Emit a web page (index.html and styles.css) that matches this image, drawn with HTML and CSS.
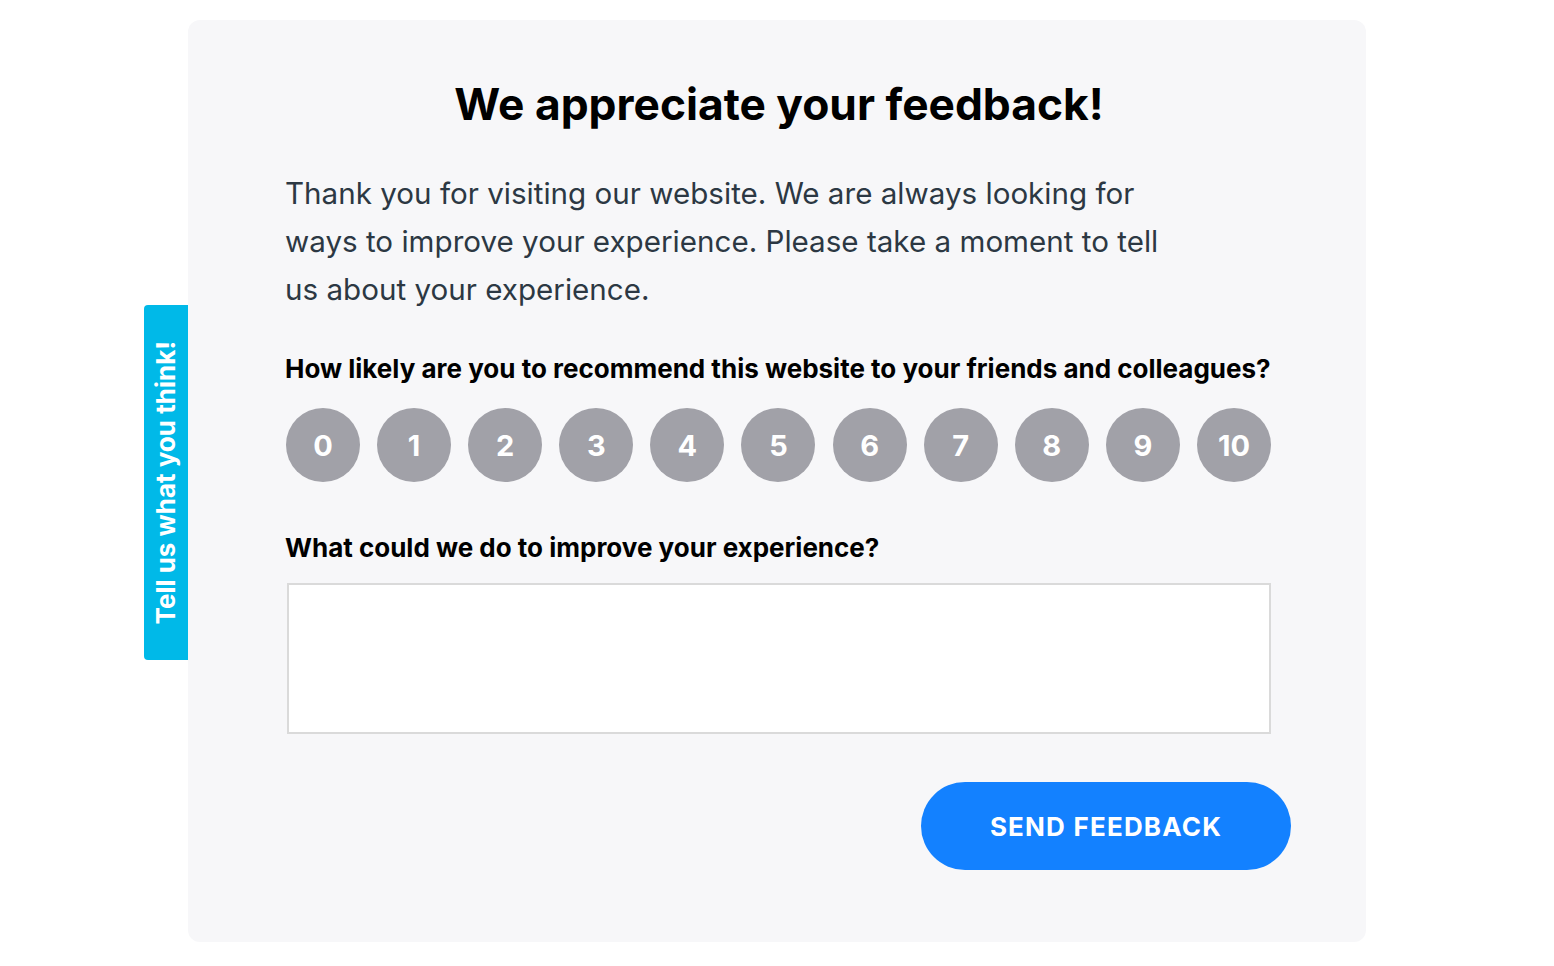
FILE: index.html
```html
<!DOCTYPE html>
<html lang="en">
<head>
<meta charset="utf-8">
<title>Feedback</title>
<link rel="stylesheet" href="styles.css">
</head>
<body>
<div class="page">
  <div class="card">
    <button class="side-tab" type="button"><span>Tell us what you think!</span></button>
    <h1 class="title">We appreciate your feedback!</h1>
    <p class="intro">Thank you for visiting our website. We are always looking for ways to improve your experience. Please take a moment to tell us about your experience.</p>
    <h2 class="question q-rate">How likely are you to recommend this website to your friends and colleagues?</h2>
    <div class="scale">
      <button class="dot" type="button">0</button>
      <button class="dot" type="button">1</button>
      <button class="dot" type="button">2</button>
      <button class="dot" type="button">3</button>
      <button class="dot" type="button">4</button>
      <button class="dot" type="button">5</button>
      <button class="dot" type="button">6</button>
      <button class="dot" type="button">7</button>
      <button class="dot" type="button">8</button>
      <button class="dot" type="button">9</button>
      <button class="dot" type="button">10</button>
    </div>
    <h2 class="question q-improve">What could we do to improve your experience?</h2>
    <textarea class="answer"></textarea>
    <button class="send" type="button">SEND FEEDBACK</button>
  </div>
</div>
</body>
</html>
```
FILE: styles.css
```css
* { box-sizing: border-box; }
html, body { margin: 0; padding: 0; background: #ffffff; }
body { font-family: "Inter", "Lato", sans-serif; }

.page {
  display: flex;
  justify-content: center;
  padding-top: 20px;
}

.card {
  position: relative;
  width: 1178px;
  height: 922px;
  background: #f7f7f9;
  border-radius: 12px;
  padding: 56px 95px 0 97px;
  display: flex;
  flex-direction: column;
}

.side-tab {
  position: absolute;
  left: -44px;
  top: 285px;
  width: 44px;
  height: 355px;
  background: #00b9e8;
  border: none;
  border-radius: 4px 0 0 4px;
  padding: 0;
  display: flex;
  align-items: center;
  justify-content: center;
  cursor: pointer;
}
.side-tab span {
  writing-mode: vertical-rl;
  transform: rotate(180deg);
  color: #ffffff;
  font-family: "Inter", sans-serif;
  font-weight: 700;
  font-size: 26px;
  line-height: 44px;
  white-space: nowrap;
}

.title {
  margin: 0;
  text-align: center;
  font-size: 44.3px;
  line-height: 56px;
  font-weight: 700;
  color: #000000;
  margin-right: -2px;
}

.intro {
  margin: 37px 0 0 0;
  max-width: 888px;
  font-size: 29.6px;
  line-height: 48px;
  font-weight: 400;
  color: #2c3843;
}

.question {
  margin: 0;
  font-size: 26px;
  line-height: 32px;
  font-weight: 700;
  color: #000000;
}
.q-rate { margin-top: 40px; }
.q-improve { margin-top: 50px; }

.scale {
  margin-top: 23px;
  display: flex;
  justify-content: space-between;
  padding-left: 1px;
}
.dot {
  width: 74px;
  height: 74px;
  border-radius: 50%;
  border: none;
  background: #a1a1a8;
  color: #ffffff;
  font-family: "Inter", sans-serif;
  font-weight: 700;
  font-size: 29px;
  padding: 0;
  display: flex;
  align-items: center;
  justify-content: center;
  cursor: pointer;
}

.answer {
  margin: 19px 0 0 2px;
  width: 984px;
  height: 151px;
  border: 2px solid #dadada;
  background: #ffffff;
  resize: none;
  font-family: "Inter", sans-serif;
  font-size: 18px;
  padding: 10px;
}

.send {
  margin-top: 48px;
  margin-right: -20px;
  align-self: flex-end;
  width: 370px;
  height: 88px;
  border: none;
  border-radius: 44px;
  background: #1381ff;
  color: #ffffff;
  font-family: "Inter", sans-serif;
  font-weight: 700;
  font-size: 26px;
  letter-spacing: 1.2px;
  cursor: pointer;
}
```
